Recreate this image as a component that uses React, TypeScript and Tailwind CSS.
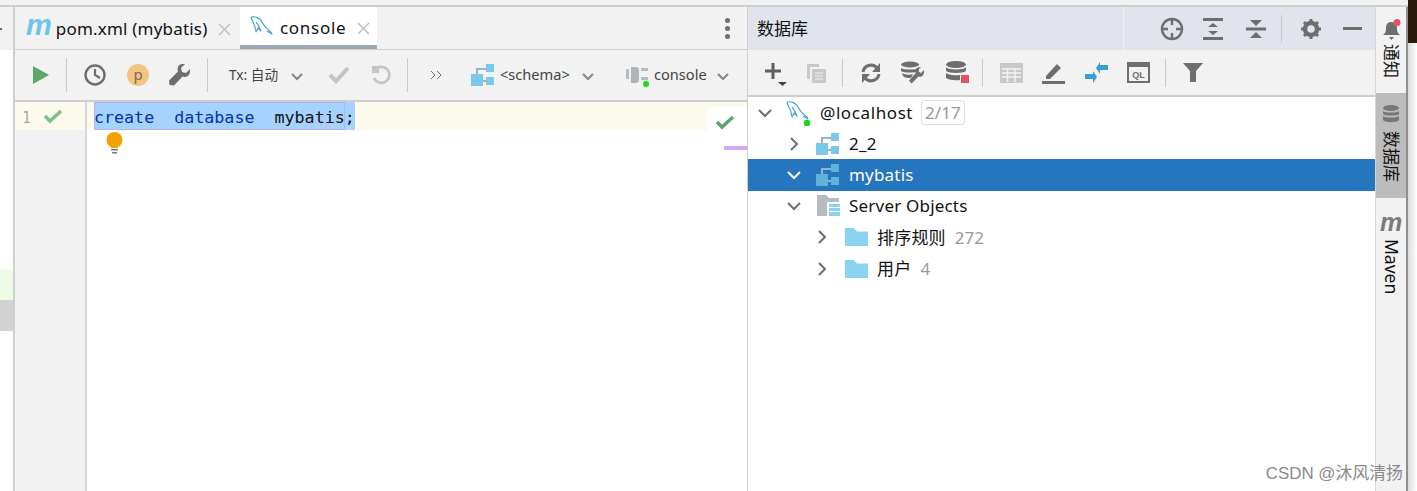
import type { ReactNode } from 'react';

const ui = "font-['Noto_Sans','Noto_Sans_CJK_SC',sans-serif]";

function Dolphin({ dot }: { dot?: boolean }) {
  return (
    <svg width="26" height="26" viewBox="0 0 26 26" fill="none" className="shrink-0">
      <path d="M1 2C5 1 10 3 12 7c2 4 5 7 9 10l1 2-5-3" stroke="#45a5d8" strokeWidth="1.2" strokeLinejoin="round" />
      <path d="M1 2c1 4 3 7 4 10l1 5 2-4 3 3C9 12 8 9 6 7" stroke="#45a5d8" strokeWidth="1.2" strokeLinejoin="round" />
      {dot && <circle cx="21" cy="23" r="3.3" fill="#1fd11f" />}
    </svg>
  );
}

function Schema({ dim }: { dim?: boolean }) {
  const c = dim ? '#5fb4d6' : '#79c9ea';
  return (
    <svg width="24" height="22" viewBox="0 0 24 22" className="shrink-0">
      <path d="M6 11V5h10" stroke={dim ? '#8fb6cc' : '#a5b0b8'} strokeWidth="2" fill="none" />
      <path d="M12 17h5" stroke={dim ? '#8fb6cc' : '#a5b0b8'} strokeWidth="2" />
      <rect x="15" y="0" width="8" height="8" fill={c} />
      <rect x="0" y="10" width="12" height="12" fill={c} />
      <rect x="15" y="13" width="8" height="8" fill={c} />
    </svg>
  );
}

function Folder() {
  return (
    <svg width="23" height="18" viewBox="0 0 23 18" className="shrink-0">
      <path d="M0 0h9l3 3.5h11V18H0z" fill="#8ad3ee" />
    </svg>
  );
}

function Chevron({ open, color = '#6e6e6e' }: { open?: boolean; color?: string }) {
  return (
    <svg width="14" height="14" viewBox="0 0 14 14" fill="none" className="shrink-0">
      <path d={open ? 'M1 4l6 6 6-6' : 'M4 1l6 6-6 6'} stroke={color} strokeWidth="2" />
    </svg>
  );
}

function SmallDown() {
  return (
    <svg width="14" height="10" viewBox="0 0 14 10" fill="none" className="shrink-0 mt-[3px]">
      <path d="M2 2l5 5 5-5" stroke="#7f8b91" strokeWidth="2.2" />
    </svg>
  );
}

function Sep({ h = 'h-8' }: { h?: string }) {
  return <div className={`w-px bg-[#c9c9c9] shrink-0 ${h}`} />;
}

function Ico({ w = 24, h = 24, children }: { w?: number; h?: number; children: ReactNode }) {
  return (
    <svg width={w} height={h} viewBox={`0 0 ${w} ${h}`} fill="none" className="shrink-0">
      {children}
    </svg>
  );
}

function EditorToolbar() {
  return (
    <div className={`h-[52px] flex items-center border-b-2 border-[#cfcfcf] bg-[#f2f2f2] ${ui}`}>
      <div className="w-[51px] pl-[18px] shrink-0">
        <Ico w={16} h={18}>
          <path d="M0 0l16 9-16 9z" fill="#59a869" />
        </Ico>
      </div>
      <Sep h="h-[34px]" />
      <div className="ml-[16px] shrink-0">
        <Ico w={24} h={24}>
          <circle cx="12" cy="12" r="9.5" stroke="#6e6e6e" strokeWidth="2.4" />
          <path d="M12 6v6l5 3" stroke="#6e6e6e" strokeWidth="2.2" />
        </Ico>
      </div>
      <div className="ml-[20px] w-[22px] h-[22px] rounded-full bg-[#f4c582] text-[#7a6a50] text-[15px] leading-[20px] text-center shrink-0">p</div>
      <div className="ml-[19px] shrink-0">
        <Ico w={23} h={23}>
          <path d="M22 5l-4 4-4-1-1-4 4-4c-3-.5-6 .5-7 3-.7 1.700-.5 3 0 4.500L1 16.500 1.500 21l4.500.5 8.500-9c1.500.5 3 .700 4.500 0 2.500-1 3.500-4.500 3-7.500z" fill="#6e6e6e" />
        </Ico>
      </div>
      <div className="w-[16px]" />
      <Sep h="h-[34px]" />
      <div className="ml-[21px] text-[13.7px] text-[#444] whitespace-nowrap w-[52px]">Tx: 自动</div>
      <div className="ml-[9px]">
        <SmallDown />
      </div>
      <div className="ml-[24px] shrink-0">
        <Ico w={22} h={18}>
          <path d="M2 9l6 6L20 2" stroke="#c4c4c4" strokeWidth="4" />
        </Ico>
      </div>
      <div className="ml-[21px] shrink-0">
        <Ico w={20} h={20}>
          <path d="M4 5a8 8 0 1 1-1 8" stroke="#c4c4c4" strokeWidth="2.600" />
          <path d="M1 1h7v7H1z" fill="#c4c4c4" />
        </Ico>
      </div>
      <div className="w-[16px]" />
      <Sep h="h-[34px]" />
      <div className="ml-[22px] shrink-0">
        <Ico w={12} h={10}>
          <path d="M1 1l4 4-4 4M7 1l4 4-4 4" stroke="#6e6e6e" strokeWidth="1" />
        </Ico>
      </div>
      <div className="ml-[29px]">
        <Schema />
      </div>
      <div className="ml-[5px] text-[14.6px] text-[#444] w-[72px] whitespace-nowrap">&lt;schema&gt;</div>
      <div className="ml-[9px]">
        <SmallDown />
      </div>
      <div className="ml-[31px] shrink-0">
        <Ico w={24} h={24}>
          <rect x="0" y="6" width="3" height="10" rx="1" fill="#b4bcc2" />
          <path d="M5 4h6l2 2v12l-2 2H5z" fill="#acb5bb" />
          <rect x="15" y="5" width="7" height="3" fill="#b4bcc2" />
          <rect x="15" y="14" width="7" height="3" fill="#b4bcc2" />
          <circle cx="20" cy="21" r="3" fill="#17e017" />
        </Ico>
      </div>
      <div className="ml-[4px] text-[14.6px] text-[#444] w-[56px]">console</div>
      <div className="ml-[6px]">
        <SmallDown />
      </div>
    </div>
  );
}

function Editor() {
  return (
    <div className="w-[732px] shrink-0 flex flex-col relative">
      <div className={`h-[43px] bg-[#f2f2f2] border-b border-[#cfcfcf] flex ${ui}`}>
        <div className="w-[225px] flex items-center pl-[11px] pt-[2px] shrink-0">
          <span className="text-[#6dc5e8] text-[29px] leading-none font-bold italic font-['Liberation_Sans',sans-serif] -mt-2">m</span>
          <span className="ml-[4px] text-[17px] tracking-[0.2px] text-[#111] whitespace-nowrap">pom.xml (mybatis)</span>
          <svg width="13" height="13" viewBox="0 0 13 13" className="ml-[10px] shrink-0">
            <path d="M1 1l11 11M12 1L1 12" stroke="#bdbdbd" strokeWidth="1.400" />
          </svg>
        </div>
        <div className="w-[137px] bg-white border-b-[4px] border-[#9ca7b8] flex items-center pl-[10px] pt-[4px] shrink-0">
          <Dolphin />
          <span className="ml-[4px] text-[17px] tracking-[0.7px] text-[#111]">console</span>
          <svg width="13" height="13" viewBox="0 0 13 13" className="ml-[11px] shrink-0">
            <path d="M1 1l11 11M12 1L1 12" stroke="#bdbdbd" strokeWidth="1.400" />
          </svg>
        </div>
        <div className="flex-1 flex items-center justify-end pr-[17px]">
          <div className="flex flex-col gap-[3px]">
            <div className="w-[5px] h-[5px] rounded-full bg-[#6e6e6e]" />
            <div className="w-[5px] h-[5px] rounded-full bg-[#6e6e6e]" />
            <div className="w-[5px] h-[5px] rounded-full bg-[#6e6e6e]" />
          </div>
        </div>
      </div>
      <EditorToolbar />
      <div className="flex-1 flex min-h-0">
        <div className="w-[72px] bg-[#f2f2f2] border-r-2 border-[#d6d6d6] shrink-0">
          <div className="h-[28px] bg-[#fcfaed] flex items-center pl-[7px]">
            <span className="text-[15px] leading-[20px] pt-[3px] text-[#aaa] font-['DejaVu_Sans_Mono',monospace] w-[15px]">1</span>
            <svg width="20" height="16" viewBox="0 0 20 16" className="ml-[6px]">
              <path d="M2 8l5 5L18 3" stroke="#7fbf8c" strokeWidth="3.500" fill="none" />
            </svg>
          </div>
        </div>
        <div className="flex-1 min-w-0">
          <div className="h-[28px] bg-[#fcfaed] pl-[7px] flex items-center">
            <div className="bg-[#a6d2ff] h-[28px] leading-[31px] font-['DejaVu_Sans_Mono',monospace] text-[16.66px] whitespace-pre text-[#111]">
              <span className="inline-block h-[28px] outline outline-[#b9b0f2] -outline-offset-1">
                <span className="text-[#0033b3]">create</span>
                {'  '}
                <span className="text-[#0033b3]">database</span>
                {'  mybatis'}
              </span>
              ;
            </div>
          </div>
          <div className="pl-[19px] pt-[2px]">
            <svg width="17" height="22" viewBox="0 0 17 22">
              <circle cx="8.500" cy="8" r="8" fill="#f2a200" />
              <rect x="5" y="13" width="7" height="3" fill="#f2a200" />
              <rect x="5" y="17" width="7" height="1.500" fill="#777" />
              <rect x="6" y="20" width="5" height="1.500" fill="#777" />
            </svg>
          </div>
        </div>
      </div>
      <div className="absolute right-0 top-[100px] w-[40px] h-[29px] bg-white rounded-tl-md flex items-center pl-[8px]">
        <svg width="20" height="16" viewBox="0 0 20 16">
          <path d="M2 8l5 5L18 3" stroke="#59a869" strokeWidth="3.500" fill="none" />
        </svg>
      </div>
      <div className="absolute right-0 top-[139px] w-[23px] h-[4px] bg-[#d2a8f5]" />
    </div>
  );
}

function DatabaseToolbar() {
  return (
    <div className="h-[47px] bg-[#f2f2f2] border-b-2 border-[#cfcfcf] flex items-center">
      <div className="ml-[16px] relative w-[24px] h-[26px] shrink-0">
        <svg width="24" height="26" viewBox="0 0 24 26">
          <path d="M9 3v16M1 11h16" stroke="#5f5f5f" strokeWidth="3" />
          <path d="M14 22h9l-4.500 4z" fill="#444" />
        </svg>
      </div>
      <div className="ml-[18px] shrink-0">
        <Ico w={20} h={20}>
          <path d="M1 1h12v3H4v12H1z" fill="#c9c9c9" />
          <path d="M6 6h14v14H6z" fill="#c9c9c9" />
          <path d="M9 10h8M9 13h8M9 16h8" stroke="#f2f2f2" />
        </Ico>
      </div>
      <div className="ml-[16px]">
        <Sep h="h-[28px]" />
      </div>
      <div className="ml-[18px] shrink-0">
        <Ico w={20} h={20}>
          <path d="M2 9a8 8 0 0 1 14-4M18 11a8 8 0 0 1-14 4" stroke="#6e6e6e" strokeWidth="3" />
          <path d="M19 0v9h-8zM1 20v-9h8z" fill="#6e6e6e" />
        </Ico>
      </div>
      <div className="ml-[19px] shrink-0">
        <Ico w={25} h={23}>
          <ellipse cx="10" cy="3.500" rx="9" ry="3" fill="#6e6e6e" />
          <path d="M1 7c3 2 15 2 18 0v3c-3 2-15 2-18 0zM2 12c3 2 9 2 11 1l-2 4c-3 0-6 0-8-2z" fill="#6e6e6e" />
          <path d="M24 9l-3 3-2-1-1-2 3-3c-3 0-5 1-5.500 3-.3 1 0 2 .3 3L9 19.500l2.500 3 7-7c1 .3 2 .3 3 0 2-1 3-4 2.500-6.500z" fill="#6e6e6e" />
        </Ico>
      </div>
      <div className="ml-[21px] shrink-0">
        <Ico w={23} h={23}>
          <ellipse cx="10" cy="3.500" rx="10" ry="3.500" fill="#6e6e6e" />
          <path d="M0 6.500c3 2.500 17 2.500 20 0V10c-3 2.500-17 2.500-20 0zM0 12c3 2.500 12 2.500 14 2v5c-5 .5-11 0-14-2z" fill="#6e6e6e" />
          <rect x="15" y="14" width="8" height="8" fill="#e05561" />
        </Ico>
      </div>
      <div className="ml-[13px]">
        <Sep h="h-[28px]" />
      </div>
      <div className="ml-[17px] shrink-0">
        <Ico w={23} h={20}>
          <rect width="23" height="20" fill="#c9c9c9" />
          <path d="M2 6h19M2 10h19M2 14h19M7.500 5v14M15 5v14" stroke="#f2f2f2" strokeWidth="1.500" />
        </Ico>
      </div>
      <div className="ml-[19px] shrink-0">
        <Ico w={23} h={23}>
          <path d="M4 15L15 3l4 4L8 18H4z" fill="#6e6e6e" />
          <rect y="20" width="23" height="3" fill="#6e6e6e" />
        </Ico>
      </div>
      <div className="ml-[20px] shrink-0">
        <Ico w={23} h={21}>
          <path d="M11 6l4-6v3h8v5h-8v4z" fill="#389fd6" />
          <path d="M12 15l-4-6v3H0v5h8v4z" fill="#389fd6" />
        </Ico>
      </div>
      <div className="ml-[19px] shrink-0">
        <Ico w={23} h={21}>
          <rect x="1" y="1" width="21" height="19" stroke="#6e6e6e" strokeWidth="2" />
          <rect x="1" y="1" width="21" height="4" fill="#6e6e6e" />
          <text x="11.500" y="16" textAnchor="middle" fontSize="9" fontWeight="700" fill="#6e6e6e" fontFamily="Liberation Sans">QL</text>
        </Ico>
      </div>
      <div className="ml-[15px]">
        <Sep h="h-[28px]" />
      </div>
      <div className="ml-[17px] shrink-0">
        <Ico w={20} h={19}>
          <path d="M0 0h20l-7 8v11H7V8z" fill="#6e6e6e" />
        </Ico>
      </div>
    </div>
  );
}

function TreeRow({ indent, open, selected, icon, label, count, wide, children }: {
  indent: number;
  open?: boolean;
  selected?: boolean;
  icon: ReactNode;
  label: string;
  count?: string;
  wide?: boolean;
  children?: ReactNode;
}) {
  return (
    <div className={`h-[31.2px] flex items-center ${selected ? 'bg-[#2675bf] text-white' : 'text-[#111]'}`} style={{ paddingLeft: indent }}>
      <Chevron open={open} color={selected ? '#ffffff' : '#6e6e6e'} />
      <div className="ml-[15px] w-[24px] flex justify-center shrink-0">{icon}</div>
      <span className={`ml-[9px] text-[17px] whitespace-nowrap ${wide ? 'tracking-[0.6px]' : 'tracking-[0.2px]'}`}>{label}</span>
      {count && <span className="ml-[9px] text-[17px] text-[#999]">{count}</span>}
      {children}
    </div>
  );
}

function DatabasePanel() {
  return (
    <div className={`w-[627px] shrink-0 flex flex-col ${ui}`}>
      <div className="h-[43px] bg-[#e1e4ec] flex items-center">
        <span className="ml-[9px] text-[17px] text-[#111]">数据库</span>
        <div className="ml-auto w-[252px] h-full border-l border-[#f2f2f2] flex items-center pl-[36px]">
          <Ico w={24} h={24}>
            <circle cx="12" cy="12" r="10" stroke="#6e6e6e" strokeWidth="2.400" />
            <path d="M12 1v7M12 16v7M1 12h7M16 12h7" stroke="#6e6e6e" strokeWidth="2.400" />
          </Ico>
          <div className="ml-[19px]">
            <Ico w={20} h={22}>
              <path d="M0 1.500h20M0 20.500h20" stroke="#6e6e6e" strokeWidth="3" />
              <path d="M10 5l5 4H5zM10 17l5-4H5z" fill="#6e6e6e" />
            </Ico>
          </div>
          <div className="ml-[23px]">
            <Ico w={20} h={22}>
              <path d="M0 11h20" stroke="#6e6e6e" strokeWidth="3" />
              <path d="M4 2h12l-6 6zM4 20h12l-6-6z" fill="#6e6e6e" />
            </Ico>
          </div>
          <div className="ml-[15px]">
            <Sep h="h-[28px]" />
          </div>
          <div className="ml-[19px]">
            <Ico w={20} h={20}>
              <circle cx="10" cy="10" r="6" stroke="#6e6e6e" strokeWidth="4.500" />
              <path d="M10 0v4M10 16v4M0 10h4M16 10h4M3 3l3 3M14 14l3 3M17 3l-3 3M6 14l-3 3" stroke="#6e6e6e" strokeWidth="3" />
            </Ico>
          </div>
          <div className="ml-[22px] w-[19px] h-[3px] bg-[#6e6e6e]" />
        </div>
      </div>
      <DatabaseToolbar />
      <div className="flex-1 bg-white">
        <TreeRow indent={10} open wide icon={<Dolphin dot />} label="@localhost">
          <span className="ml-[8px] px-[3px] h-[25px] leading-[24px] border border-[#dedede] rounded-[3px] text-[17px] text-[#999]">2/17</span>
        </TreeRow>
        <TreeRow indent={39} icon={<Schema />} label="2_2" />
        <TreeRow indent={39} open selected icon={<Schema dim />} label="mybatis" />
        <TreeRow
          indent={39}
          open
          icon={
            <svg width="23" height="22" viewBox="0 0 23 22">
              <path d="M0 0h9l3 3h10v4H10v14H0z" fill="#b4bcc2" />
              <path d="M12 9h11v3H12zM12 13h11v3H12zM12 17h11v4H12z" fill="#8ad3ee" />
            </svg>
          }
          label="Server Objects"
        />
        <TreeRow indent={67} icon={<Folder />} label="排序规则" count="272" />
        <TreeRow indent={67} icon={<Folder />} label="用户" count="4" />
      </div>
    </div>
  );
}

function SideTab({ active, h, children }: { active?: boolean; h: string; children: ReactNode }) {
  return (
    <div className={`flex flex-col items-center pt-[12px] ${h} ${active ? 'bg-[#bcbcbc]' : ''}`}>{children}</div>
  );
}

const sideText = '[writing-mode:vertical-rl] [text-orientation:sideways] leading-none text-[#111] whitespace-nowrap';

function SideBar() {
  return (
    <div className={`w-[33px] shrink-0 bg-[#f2f2f2] border-l border-[#d6d6d6] border-r-2 border-r-[#8f8f8f] ${ui}`}>
      <SideTab h="h-[86px]">
        <svg width="19" height="22" viewBox="0 0 19 22">
          <path d="M9 3c-4 0-5 3-5 7 0 3-1 4-3 6h17c-2-2-3-3-3-6 0-4-1-7-6-7z" fill="#6e6e6e" />
          <path d="M7 18h5l-2.500 3z" fill="#6e6e6e" />
          <circle cx="15" cy="3.500" r="3.500" fill="#e05561" />
        </svg>
        <span className={`${sideText} text-[17px] mt-[3px]`}>通知</span>
      </SideTab>
      <SideTab active h="h-[105px]">
        <svg width="18" height="20" viewBox="0 0 18 20">
          <ellipse cx="9" cy="3" rx="8" ry="3" fill="#777" />
          <path d="M1 6c2 2 14 2 16 0v3c-2 2-14 2-16 0zM1 11c2 2 14 2 16 0v4c-2 3-14 3-16 0z" fill="#777" />
        </svg>
        <span className={`${sideText} text-[17px] mt-[6px]`}>数据库</span>
      </SideTab>
      <SideTab h="h-[120px]">
        <span className="text-[#7a7a7a] text-[25px] leading-[18px] font-bold italic font-['Liberation_Sans',sans-serif] mt-[3px]">m</span>
        <span className={`${sideText} text-[17.5px] mt-[8px]`}>Maven</span>
      </SideTab>
    </div>
  );
}

export default function App() {
  return (
    <div className="relative w-[1417px] h-[491px] overflow-hidden bg-white flex flex-col">
      <div className="h-[7px] bg-[#f2f2f2] border-b-2 border-[#cfcfcf] shrink-0" />
      <div className="flex-1 flex min-h-0">
        <div className="w-[15px] shrink-0 border-r-2 border-[#cfcfcf] flex flex-col">
          <div className="h-[43px] bg-[#f2f2f2] relative">
            <div className="absolute left-0 top-[21px] w-[2px] h-[2px] bg-[#666]" />
          </div>
          <div className="h-[219px]" />
          <div className="h-[31px] bg-[#eefbe6]" />
          <div className="h-[31px] bg-[#d2d2d2]" />
        </div>
        <Editor />
        <div className="w-px bg-[#cfcfcf] shrink-0" />
        <DatabasePanel />
        <SideBar />
        <div className="flex-1 bg-gradient-to-r from-[#dcdcdc] to-white" />
      </div>
      <div className="absolute right-0 top-0 w-[9px] h-[43px] bg-[#2a1a0c]" />
      <div className="absolute right-[14px] bottom-[5px] text-[16.9px] text-[#8a8a8a] font-['Liberation_Sans','Noto_Sans_CJK_SC',sans-serif]">CSDN @沐风清扬</div>
    </div>
  );
}
